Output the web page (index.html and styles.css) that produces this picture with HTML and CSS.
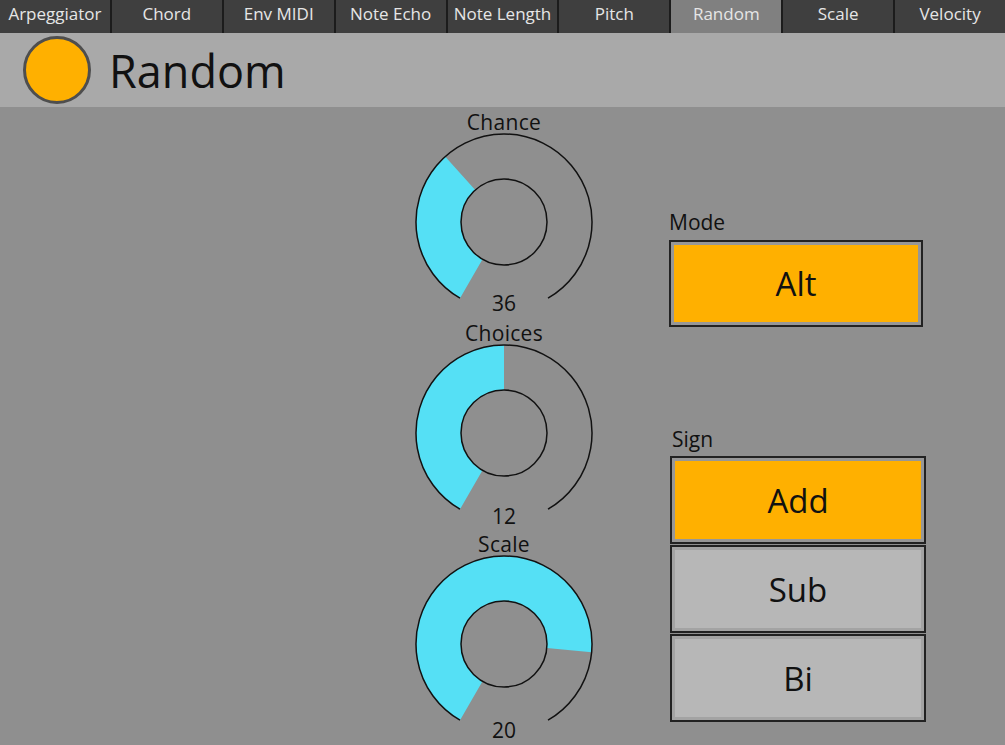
FILE: index.html
```html
<!DOCTYPE html>
<html>
<head>
<meta charset="utf-8">
<link rel="stylesheet" href="styles.css">
</head>
<body>
<nav class="tabs">
  <div class="tab">Arpeggiator</div>
  <div class="tab">Chord</div>
  <div class="tab">Env MIDI</div>
  <div class="tab">Note Echo</div>
  <div class="tab">Note Length</div>
  <div class="tab">Pitch</div>
  <div class="tab active">Random</div>
  <div class="tab">Scale</div>
  <div class="tab">Velocity</div>
</nav>
<header class="header">
  <div class="led"></div>
  <h1 class="title">Random</h1>
</header>
<main class="main">
  <section class="knobs">
    <div class="knob">
      <div class="knob-label">Chance</div>
      <svg class="dial" width="180" height="180" viewBox="0 0 180 180">
        <path class="fill" d="M46 166.21 A88 88 0 0 1 31.12 24.61 L61.23 58.05 A43 43 0 0 0 68.5 127.24 Z"/>
        <path class="ring" d="M46 166.21 A88 88 0 1 1 134 166.21"/>
        <circle class="ring" cx="90" cy="90" r="43"/>
      </svg>
      <div class="knob-value v1">36</div>
    </div>
    <div class="knob">
      <div class="knob-label">Choices</div>
      <svg class="dial" width="180" height="180" viewBox="0 0 180 180">
        <path class="fill" d="M46 166.21 A88 88 0 0 1 90 2 L90 47 A43 43 0 0 0 68.5 127.24 Z"/>
        <path class="ring" d="M46 166.21 A88 88 0 1 1 134 166.21"/>
        <circle class="ring" cx="90" cy="90" r="43"/>
      </svg>
      <div class="knob-value v2">12</div>
    </div>
    <div class="knob">
      <div class="knob-label">Scale</div>
      <svg class="dial" width="180" height="180" viewBox="0 0 180 180">
        <path class="fill" d="M46 166.21 A88 88 0 1 1 177.61 98.28 L132.81 94.05 A43 43 0 1 0 68.5 127.24 Z"/>
        <path class="ring" d="M46 166.21 A88 88 0 1 1 134 166.21"/>
        <circle class="ring" cx="90" cy="90" r="43"/>
      </svg>
      <div class="knob-value v3">20</div>
    </div>
  </section>
  <section class="controls">
    <div class="group mode">
      <div class="group-label">Mode</div>
      <div class="btn on"><div class="face">Alt</div></div>
    </div>
    <div class="group sign">
      <div class="group-label">Sign</div>
      <div class="btn on"><div class="face">Add</div></div>
      <div class="btn"><div class="face">Sub</div></div>
      <div class="btn"><div class="face">Bi</div></div>
    </div>
  </section>
</main>
</body>
</html>
```
FILE: styles.css
```css
* { box-sizing: border-box; }
html, body {
  margin: 0;
  padding: 0;
  width: 1005px;
  height: 745px;
  overflow: hidden;
  background: #8f8f8f;
  font-family: "Open Sans", "Noto Sans", sans-serif;
}
.tabs {
  display: grid;
  grid-template-columns: repeat(9, 1fr);
  column-gap: 2px;
  height: 33px;
  background: #1c1c1c;
}
.tab {
  background: #3f3f3f;
  color: #e6e6e6;
  font-size: 17px;
  line-height: 28px;
  text-align: center;
  white-space: nowrap;
  overflow: hidden;
}
.tab.active { background: #808080; }
.header {
  height: 74px;
  background: #a9a9a9;
  display: flex;
  align-items: center;
  padding-left: 23px;
  gap: 18px;
}
.led {
  width: 68px;
  height: 68px;
  border-radius: 50%;
  background: #ffb000;
  border: 3px solid #4e4e4e;
}
.title {
  margin: 0;
  font-weight: 400;
  font-size: 45px;
  color: #111;
  line-height: 1;
}
.main {
  display: flex;
  padding-left: 414px;
  gap: 75px;
}
.knobs {
  display: flex;
  flex-direction: column;
  width: 180px;
  padding-top: 3px;
  gap: 8px;
}
.knob {
  display: flex;
  flex-direction: column;
  align-items: center;
  height: 203px;
}
.knob-label, .knob-value {
  font-size: 21px;
  line-height: 24px;
  color: #111;
}
.knob-label { letter-spacing: 0.3px; }
.dial { display: block; margin-top: -2px; flex: none; }
.knob-value.v1 { margin-top: -21px; }
.knob-value.v2 { margin-top: -19px; }
.knob-value.v3 { margin-top: -16px; }
.fill { fill: #55e0f5; stroke: none; }
.ring { fill: none; stroke: #111; stroke-width: 1.5; }
.controls {
  display: flex;
  flex-direction: column;
  padding-top: 103px;
}
.group { display: flex; flex-direction: column; }
.group-label {
  font-size: 21px;
  line-height: 24px;
  color: #111;
  margin-bottom: 6px;
}
.mode { width: 254px; }
.sign {
  width: 256px;
  margin-left: 1px;
  margin-top: 100px;
  gap: 1px;
}
.sign .group-label { margin-left: 2px; margin-bottom: 4px; }
.btn {
  height: 88px;
  border: 2px solid #222;
  padding: 3px;
  background: #979797;
}
.mode .btn { height: 87px; }
.face {
  height: 100%;
  display: flex;
  align-items: center;
  justify-content: center;
  background: #b7b7b7;
  font-size: 33px;
  color: #111;
}
.btn:not(.on) { background: #a3a3a3; }
.btn.on .face { background: #ffb000; }
```
